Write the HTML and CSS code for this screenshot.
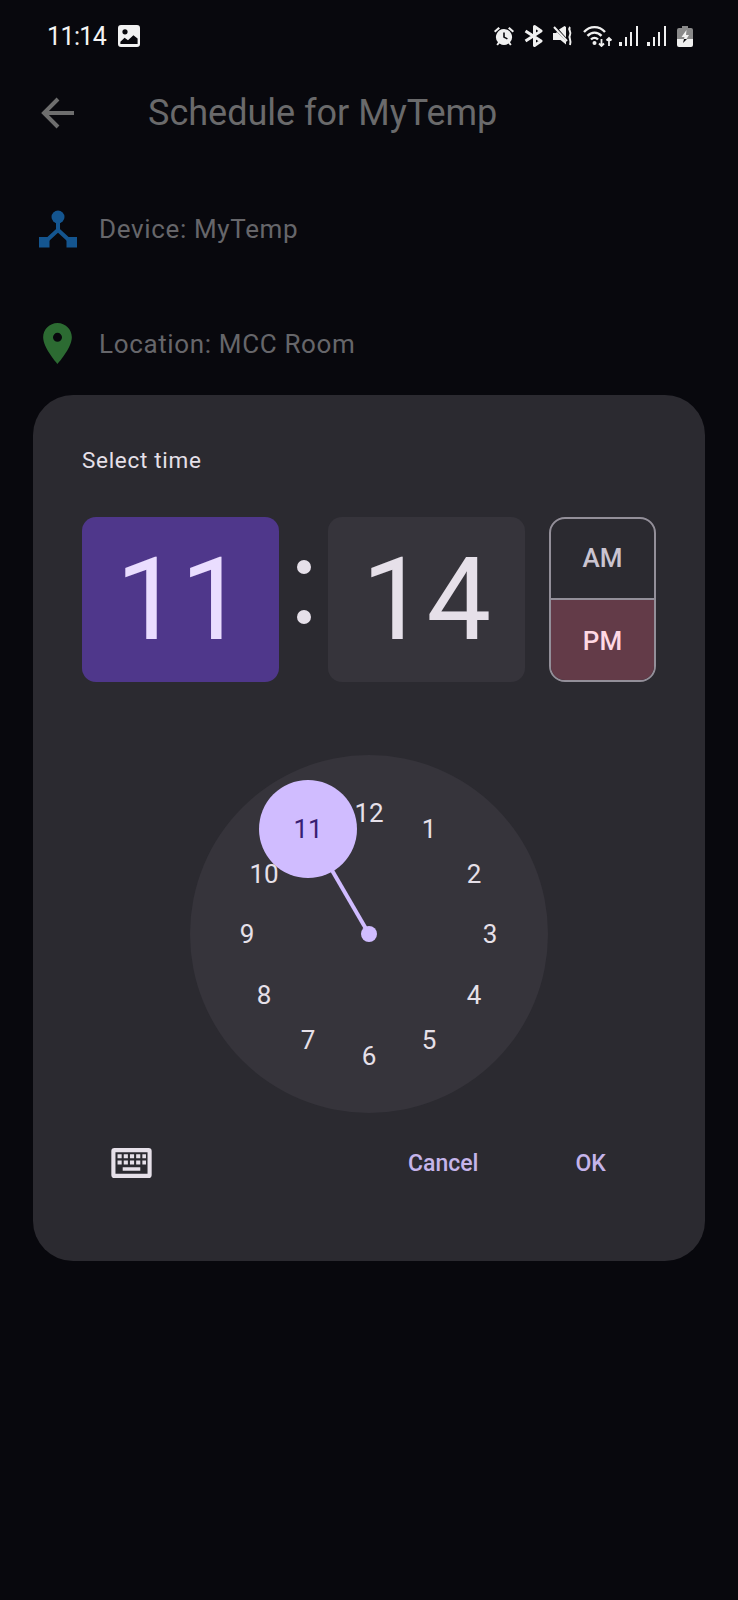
FILE: index.html
```html
<!DOCTYPE html>
<html lang="en">
<head>
<meta charset="utf-8">
<title>Schedule for MyTemp</title>
<link rel="stylesheet" href="styles.css">
</head>
<body>
<div class="page">
  <header class="status">
    <div class="status-left">
      <span class="clock-time">11:14</span>
      <svg class="ic-image" viewBox="0 0 22 22"><path fill="#f2f2f2" fill-rule="evenodd" d="M3 0h16a3 3 0 0 1 3 3v16a3 3 0 0 1-3 3H3a3 3 0 0 1-3-3V3a3 3 0 0 1 3-3zM7 4.200a2.600 2.600 0 1 0 0 5.200 2.600 2.600 0 0 0 0-5.200zM2.400 16.800l4.200-4 3.400 2.400 5.400-5 4.200 3.400v5.400H2.400z"/></svg>
    </div>
    <div class="status-right">
      <svg class="ic-alarm" viewBox="0 0 20 20"><path fill="#f0f0f0" fill-rule="evenodd" d="M10 3a8 8 0 0 1 6 13.300l1.600 2.200-1.500 1-1.600-2A8 8 0 0 1 5.500 17.500l-1.600 2-1.500-1L4 16.300A8 8 0 0 1 10 3zM9.200 6.500v5l3.800 2 .8-1.300-3-1.500V6.500z"/><path fill="#f0f0f0" d="M0 5l4.500-4 1.500 1.500L1.300 6.500zM20 5l-4.500-4L14 2.500l4.700 4z"/></svg>
      <svg class="ic-bt" viewBox="0 0 20 22"><path fill="none" stroke="#f0f0f0" stroke-width="3" stroke-linejoin="round" d="M1.500 6L17 16l-6.500 4.500V1.500L17 6 1.500 16"/></svg>
      <svg class="ic-mute" viewBox="0 0 20 20"><path fill="#f0f0f0" d="M0 7h3l1-1 9 9v3.500L7.500 14H0zM6 3.500L11.500 0 13 1v10.500z"/><path fill="none" stroke="#f0f0f0" stroke-width="2" d="M1 1l13 14"/><path fill="none" stroke="#f0f0f0" stroke-width="2" d="M17 1c-2.500 3 2 5 0 8s2 5 0 10"/></svg>
      <svg class="ic-wifi" viewBox="0 0 30 22"><path fill="none" stroke="#f0f0f0" stroke-width="2.400" d="M1 7c6-6.500 15-6.500 21 0M4.500 10.800c4-4.200 10-4.200 14 0M8 14.500c2-2.200 5-2.200 7 0"/><circle cx="11.500" cy="18" r="2" fill="#f0f0f0"/><path fill="none" stroke="#f0f0f0" stroke-width="1.800" d="M18.500 14v7M16 18.500l2.500 2.500 2.500-2.500M26 21v-8M23.500 15.500l2.500-2.500 2.500 2.500"/></svg>
      <svg class="ic-sig" viewBox="0 0 20 20"><path fill="#f0f0f0" d="M0 16h3v4H0zM6 11h2v9H6zM11 6h2v14h-2zM17 0h2v20h-2z"/></svg>
      <svg class="ic-sig ic-sig2" viewBox="0 0 20 20"><path fill="#f0f0f0" d="M0 16h3v4H0zM6 11h2v9H6zM11 6h2v14h-2zM17 0h2v20h-2z"/></svg>
      <svg class="ic-batt" viewBox="0 0 16 21"><path fill="#8a8a8a" d="M5 0h6v2h3a2 2 0 0 1 2 2v9H0V4a2 2 0 0 1 2-2h3z"/><path fill="#f0f0f0" d="M0 13h16v6a2 2 0 0 1-2 2H2a2 2 0 0 1-2-2z"/><path fill="#f0f0f0" d="M9.500 4L4.500 11h3l-.5 2h2.500l2.500-4H9z"/><path fill="#0a0a0e" d="M7 13l-1 4 4-4z"/></svg>
    </div>
  </header>

  <div class="appbar">
    <svg class="ic-back" viewBox="0 0 34 32"><path fill="none" stroke="#6e6e6e" stroke-width="4" d="M33 16H4M17 2L3 16l14 14"/></svg>
    <h1 class="appbar-title">Schedule for MyTemp</h1>
  </div>

  <div class="info-list">
    <div class="info-row">
      <svg class="ic-device" viewBox="0 0 40 38"><circle cx="20" cy="7" r="6.500" fill="#14558f"/><path fill="none" stroke="#14558f" stroke-width="4" d="M20 10v11M20 20L8 31M20 20l12 11"/><path fill="#14558f" d="M1 27h10.500v10.500H1zM28.500 27H39v10.500H28.500z"/></svg>
      <span class="info-text">Device: MyTemp</span>
    </div>
    <div class="info-row">
      <svg class="ic-pin" viewBox="5 2 14 20"><path fill="#2c6b32" d="M12 2C8.130 2 5 5.130 5 9c0 5.250 7 13 7 13s7-7.750 7-13c0-3.870-3.130-7-7-7zm0 9.200a2.200 2.200 0 1 1 0-4.400 2.200 2.200 0 0 1 0 4.400z"/></svg>
      <span class="info-text">Location: MCC Room</span>
    </div>
  </div>

  <section class="dialog">
    <p class="dialog-title">Select time</p>
    <div class="selector">
      <div class="field field-on">11</div>
      <div class="colon"><i class="dot"></i><i class="dot"></i></div>
      <div class="field">14</div>
      <div class="period">
        <div class="period-item">AM</div>
        <div class="period-item period-on">PM</div>
      </div>
    </div>
    <div class="dial">
      <svg class="dial-hand" viewBox="0 0 358 358"><line x1="179" y1="179" x2="118" y2="74" stroke="#d0bcff" stroke-width="4"/><circle cx="179" cy="179" r="8" fill="#d0bcff"/><circle cx="118" cy="74" r="49" fill="#d0bcff"/></svg>
      <span class="num n12">12</span>
      <span class="num n1">1</span>
      <span class="num n2">2</span>
      <span class="num n3">3</span>
      <span class="num n4">4</span>
      <span class="num n5">5</span>
      <span class="num n6">6</span>
      <span class="num n7">7</span>
      <span class="num n8">8</span>
      <span class="num n9">9</span>
      <span class="num n10">10</span>
      <span class="num n11">11</span>
    </div>
    <div class="actions">
      <svg class="ic-keyboard" viewBox="0 0 39 29"><path fill="#e6e0e9" fill-rule="evenodd" d="M3 0h33a3 3 0 0 1 3 3v23a3 3 0 0 1-3 3H3a3 3 0 0 1-3-3V3a3 3 0 0 1 3-3zM4 4v21h31V4zM6 6h4v4H6zM12 6h4v4h-4zM18 6h4v4h-4zM24 6h4v4h-4zM30 6h3.500v4H30zM6 12h4v4H6zM12 12h4v4h-4zM18 12h4v4h-4zM24 12h4v4h-4zM30 12h3.500v4H30zM11 18.500h17v3.500H11z"/></svg>
      <button class="btn btn-cancel">Cancel</button>
      <button class="btn">OK</button>
    </div>
  </section>
</div>
</body>
</html>
```
FILE: styles.css
```css
* { box-sizing: border-box; }
html, body { margin: 0; padding: 0; }
body {
  background: #08080d;
  font-family: Roboto, "Liberation Sans", sans-serif;
  width: 738px;
  height: 1600px;
  overflow: hidden;
}
.page { position: relative; width: 738px; height: 1600px; }
svg { display: block; flex: none; }

.status {
  height: 72px;
  display: flex;
  align-items: center;
  justify-content: space-between;
  padding: 0 45px 0 47px;
}
.status-left { display: flex; align-items: center; gap: 12px; }
.clock-time { color: #f4f4f4; font-size: 25px; letter-spacing: -0.6px; }
.ic-image { width: 22px; height: 22px; }
.status-right { display: flex; align-items: center; }
.ic-alarm { width: 20px; height: 20px; }
.ic-bt { width: 20px; height: 22px; margin-left: 10px; }
.ic-mute { width: 20px; height: 20px; margin-left: 9px; }
.ic-wifi { width: 30px; height: 22px; margin-left: 10px; }
.ic-sig { width: 20px; height: 20px; margin-left: 6px; }
.ic-sig2 { margin-left: 8px; }
.ic-batt { width: 16px; height: 21px; margin-left: 10px; }

.appbar { height: 82px; display: flex; align-items: center; padding-left: 41px; }
.ic-back { width: 34px; height: 32px; }
.appbar-title {
  margin: 2px 0 0 73px;
  color: #6a6a6b;
  font-size: 36px;
  font-weight: 400;
  line-height: 1.2;
}

.info-list { padding-top: 17px; }
.info-row { height: 115px; display: flex; align-items: center; padding-left: 38px; }
.info-text { color: #66666a; font-size: 26px; letter-spacing: 0.65px; }
.ic-device { width: 40px; height: 38px; margin-right: 21px; }
.ic-pin { width: 29px; height: 41px; margin: 0 27px 0 5px; }

.dialog {
  position: absolute;
  left: 33px;
  top: 395px;
  width: 672px;
  height: 866px;
  background: #2b2a30;
  border-radius: 40px;
  padding: 51px 49px 0;
}
.dialog-title {
  margin: 0;
  height: 28px;
  line-height: 28px;
  color: #e6e0e9;
  font-size: 22.500px;
  letter-spacing: 0.7px;
}
.selector { display: flex; align-items: stretch; margin-top: 43px; height: 165px; }
.field {
  width: 197px;
  display: flex;
  align-items: center;
  justify-content: center;
  background: #36343b;
  border-radius: 14px;
  color: #e6e0e9;
  font-size: 115px;
}
.field-on { background: #4f378b; color: #eaddff; }
.colon {
  width: 49px;
  padding-bottom: 16px;
  display: flex;
  flex-direction: column;
  align-items: center;
  justify-content: center;
  gap: 36px;
}
.dot { display: block; width: 14px; height: 14px; border-radius: 50%; background: #e6e0e9; }
.period {
  width: 107px;
  margin-left: 24px;
  display: flex;
  flex-direction: column;
  border: 2px solid #938f99;
  border-radius: 16px;
  overflow: hidden;
}
.period-item {
  flex: 1;
  display: flex;
  align-items: center;
  justify-content: center;
  color: #cac4d0;
  font-size: 26px;
  font-weight: 500;
}
.period-on { background: #633b48; color: #ffd8e4; border-top: 2px solid #938f99; padding-top: 2px; }

.dial {
  position: relative;
  width: 358px;
  height: 358px;
  margin: 73px 0 0 108px;
  border-radius: 50%;
  background: #36343b;
}
.dial-hand { position: absolute; inset: 0; width: 100%; height: 100%; }
.num {
  position: absolute;
  transform: translate(-50%, -50%);
  color: #e6e0e9;
  font-size: 26px;
  line-height: 1;
}
.n12 { left: 179px; top: 58px; }
.n1 { left: 239px; top: 74px; }
.n2 { left: 284px; top: 119px; }
.n3 { left: 300px; top: 179px; }
.n4 { left: 284px; top: 240px; }
.n5 { left: 239px; top: 285px; }
.n6 { left: 179px; top: 301px; }
.n7 { left: 118px; top: 285px; }
.n8 { left: 74px; top: 240px; }
.n9 { left: 57px; top: 179px; }
.n10 { left: 74px; top: 119px; }
.n11 { left: 118px; top: 74px; color: #381e72; }

.actions { display: flex; align-items: center; margin-top: 35px; height: 30px; padding-left: 29px; }
.ic-keyboard { width: 41px; height: 30px; }
.btn {
  border: 0;
  padding: 0;
  background: none;
  color: #c5b4ea;
  font-family: inherit;
  font-size: 23px;
  font-weight: 500;
}
.btn-cancel { margin-left: 256px; margin-right: 97px; }
```
